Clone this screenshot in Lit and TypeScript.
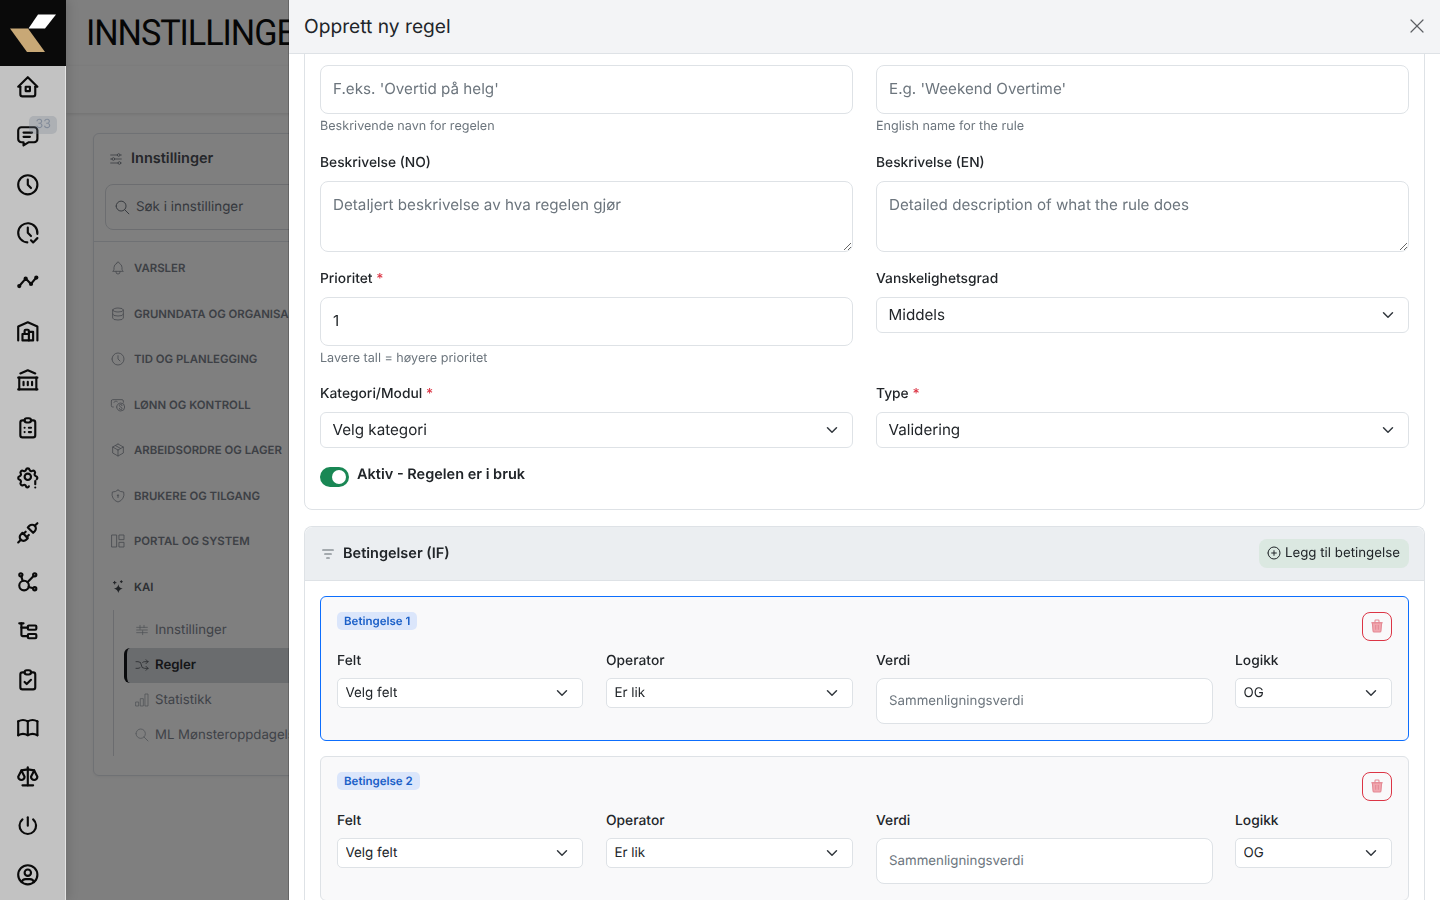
import { LitElement, html, css, svg } from 'lit';
import { customElement } from 'lit/decorators.js';

const I = {
  home: ['M5 12l-2 0l9 -9l9 9l-2 0', 'M5 12v7a2 2 0 0 0 2 2h10a2 2 0 0 0 2 -2v-7', 'M10 12h4v4h-4z'],
  message: ['M8 9h8', 'M8 13h6', 'M18 4a3 3 0 0 1 3 3v8a3 3 0 0 1 -3 3h-5l-5 3v-3h-2a3 3 0 0 1 -3 -3v-8a3 3 0 0 1 3 -3h12z'],
  clock: ['M3 12a9 9 0 1 0 18 0a9 9 0 1 0 -18 0', 'M12 7v5l3 3'],
  clockCheck: ['M20.942 13.021a9 9 0 1 0 -9.407 7.967', 'M12 7v5l3 3', 'M15 19l2 2l4 -4'],
  timeline: ['M4 16l6 -7l5 5l5 -6', 'M14 14a1 1 0 1 0 2 0a1 1 0 1 0 -2 0', 'M9 9a1 1 0 1 0 2 0a1 1 0 1 0 -2 0', 'M3 16a1 1 0 1 0 2 0a1 1 0 1 0 -2 0', 'M19 8a1 1 0 1 0 2 0a1 1 0 1 0 -2 0'],
  warehouse: ['M3 21v-13l9 -4l9 4v13', 'M13 13h4v8h-10v-6h6', 'M13 21v-9a1 1 0 0 0 -1 -1h-2a1 1 0 0 0 -1 1v3'],
  bank: ['M3 21l18 0', 'M3 10l18 0', 'M5 6l7 -3l7 3', 'M4 10l0 11', 'M20 10l0 11', 'M8 14l0 3', 'M12 14l0 3', 'M16 14l0 3'],
  clipList: ['M9 5h-2a2 2 0 0 0 -2 2v12a2 2 0 0 0 2 2h10a2 2 0 0 0 2 -2v-12a2 2 0 0 0 -2 -2h-2', 'M9 5a2 2 0 0 1 2 -2h2a2 2 0 0 1 2 2a2 2 0 0 1 -2 2h-2a2 2 0 0 1 -2 -2z', 'M9 12l.01 0', 'M13 12l2 0', 'M9 16l.01 0', 'M13 16l2 0'],
  settingsAlert: ['M13 20.9c-.5 1.4 -2.4 1.2 -2.7 -.1a1.724 1.724 0 0 0 -2.573 -1.066c-1.543 .94 -3.31 -.826 -2.37 -2.37a1.724 1.724 0 0 0 -1.065 -2.572c-1.756 -.426 -1.756 -2.924 0 -3.35a1.724 1.724 0 0 0 1.066 -2.573c-.94 -1.543 .826 -3.31 2.37 -2.37c1 .608 2.296 .07 2.572 -1.065c.426 -1.756 2.924 -1.756 3.35 0a1.724 1.724 0 0 0 2.573 1.066c1.543 -.94 3.31 .826 2.37 2.37a1.724 1.724 0 0 0 1.065 2.572c1.4 .34 1.7 2 .7 2.9', 'M9 12a3 3 0 1 0 6 0a3 3 0 1 0 -6 0', 'M19 16v3', 'M19 22v.01'],
  plug: ['M7 12l5 5l-1.5 1.5a3.536 3.536 0 1 1 -5 -5l1.5 -1.5z', 'M17 12l-5 -5l1.5 -1.5a3.536 3.536 0 1 1 5 5l-1.5 1.5z', 'M3 21l2.5 -2.5', 'M18.5 5.5l2.5 -2.5', 'M10 11l-2 2', 'M13 14l-2 2'],
  affiliate: ['M5.931 6.936l1.275 4.249m5.607 5.609l4.251 1.275', 'M11.683 12.317l5.759 -5.759', 'M4 5.5a1.5 1.5 0 1 0 3 0a1.5 1.5 0 1 0 -3 0', 'M17 5.5a1.5 1.5 0 1 0 3 0a1.5 1.5 0 1 0 -3 0', 'M17 18.5a1.5 1.5 0 1 0 3 0a1.5 1.5 0 1 0 -3 0', 'M4 15.5a4.5 4.5 0 1 0 9 0a4.5 4.5 0 1 0 -9 0'],
  subtask: ['M6 9l6 0', 'M4 5l4 0', 'M6 5v11a1 1 0 0 0 1 1h5', 'M12 8a1 1 0 0 1 1 -1h6a1 1 0 0 1 1 1v2a1 1 0 0 1 -1 1h-6a1 1 0 0 1 -1 -1z', 'M12 16a1 1 0 0 1 1 -1h6a1 1 0 0 1 1 1v2a1 1 0 0 1 -1 1h-6a1 1 0 0 1 -1 -1z'],
  clipCheck: ['M9 5h-2a2 2 0 0 0 -2 2v12a2 2 0 0 0 2 2h10a2 2 0 0 0 2 -2v-12a2 2 0 0 0 -2 -2h-2', 'M9 5a2 2 0 0 1 2 -2h2a2 2 0 0 1 2 2a2 2 0 0 1 -2 2h-2a2 2 0 0 1 -2 -2z', 'M9 14l2 2l4 -4'],
  book: ['M3 19a9 9 0 0 1 9 0a9 9 0 0 1 9 0', 'M3 6a9 9 0 0 1 9 0a9 9 0 0 1 9 0', 'M3 6l0 13', 'M12 6l0 13', 'M21 6l0 13'],
  scale: ['M7 20l10 0', 'M6 6l6 -1l6 1', 'M12 3l0 17', 'M9 12l-3 -6l-3 6a3 3 0 0 0 6 0', 'M21 12l-3 -6l-3 6a3 3 0 0 0 6 0'],
  power: ['M7 6a7.75 7.75 0 1 0 10 0', 'M12 4l0 8'],
  user: ['M3 12a9 9 0 1 0 18 0a9 9 0 1 0 -18 0', 'M9 10a3 3 0 1 0 6 0a3 3 0 1 0 -6 0', 'M6.168 18.849a4 4 0 0 1 3.832 -2.849h4a4 4 0 0 1 3.834 2.855'],
  sliders: ['M14 6a2 2 0 1 0 4 0a2 2 0 1 0 -4 0', 'M4 6l10 0', 'M18 6l2 0', 'M6 12a2 2 0 1 0 4 0a2 2 0 1 0 -4 0', 'M4 12l2 0', 'M10 12l10 0', 'M15 18a2 2 0 1 0 4 0a2 2 0 1 0 -4 0', 'M4 18l11 0', 'M19 18l1 0'],
  search: ['M3 10a7 7 0 1 0 14 0a7 7 0 1 0 -14 0', 'M21 21l-6 -6'],
  bell: ['M10 5a2 2 0 1 1 4 0a7 7 0 0 1 4 6v3a4 4 0 0 0 2 3h-16a4 4 0 0 0 2 -3v-3a7 7 0 0 1 4 -6', 'M9 17v1a3 3 0 0 0 6 0v-1'],
  database: ['M4 6a8 3 0 1 0 16 0a8 3 0 1 0 -16 0', 'M4 6v6a8 3 0 0 0 16 0v-6', 'M4 12v6a8 3 0 0 0 16 0v-6'],
  cash: ['M5 15h-1a2 2 0 0 1 -2 -2v-7a2 2 0 0 1 2 -2h14a2 2 0 0 1 2 2v2', 'M10 15a6 6 0 1 0 12 0a6 6 0 1 0 -12 0', 'M18 13a2 2 0 0 0 -4 0c0 2 4 2 4 4a2 2 0 0 1 -4 0', 'M6 8a3 3 0 0 1 5 -1'],
  box: ['M12 3l8 4.5l0 9l-8 4.5l-8 -4.5l0 -9l8 -4.5', 'M12 12l8 -4.5', 'M12 12l0 9', 'M12 12l-8 -4.5', 'M8 5.25l8 4.5'],
  shield: ['M12 3a12 12 0 0 0 8.5 3a12 12 0 0 1 -8.5 15a12 12 0 0 1 -8.5 -15a12 12 0 0 0 8.5 -3', 'M11 11a1 1 0 1 0 2 0a1 1 0 1 0 -2 0', 'M12 12l0 2.5'],
  layout: ['M3 3h7v18h-7z', 'M14 3h7v7h-7z', 'M14 14h7v7h-7z'],
  sparkleDots: ['M5 5.5h4', 'M7 3.5v4', 'M15.5 4h3', 'M17 2.5v3'],
  tune: ['M4 8h16', 'M4 16h16', 'M4 12h16', 'M9 5v6', 'M15 5v3', 'M13 13v6'],
  shuffle: ['M18 4l3 3l-3 3', 'M18 20l3 -3l-3 -3', 'M3 7h3a5 5 0 0 1 5 5a5 5 0 0 0 5 5h5', 'M21 7h-5a4.978 4.978 0 0 0 -3 1m-4 8a4.984 4.984 0 0 1 -3 1h-3'],
  bars: ['M3 15h4v6h-4z', 'M10 10h4v11h-4z', 'M17 3h4v18h-4z'],
  filter: ['M4 6h16', 'M7 12h10', 'M10 18h4'],
  plusCircle: ['M3 12a9 9 0 1 0 18 0a9 9 0 1 0 -18 0', 'M8.5 12h7', 'M12 8.5v7'],
  close: ['M4 4l16 16', 'M20 4l-16 16'],
};

const icon = (paths: string[], size = 24, sw = 2) => html`<svg class="ic" width=${size} height=${size} viewBox="0 0 24 24" fill="none" stroke="currentColor" stroke-width=${sw} stroke-linecap="round" stroke-linejoin="round">${paths.map((d) => svg`<path d=${d}></path>`)}</svg>`;

const CHEVRON = "url(\"data:image/svg+xml,%3csvg xmlns='http://www.w3.org/2000/svg' viewBox='0 0 16 16'%3e%3cpath fill='none' stroke='%23343a40' stroke-linecap='round' stroke-linejoin='round' stroke-width='2' d='m2 5 6 6 6-6'/%3e%3c/svg%3e\")";

@customElement('app-root')
export class AppRoot extends LitElement {
  static styles = css`
    :host {
      display: flex;
      position: relative;
      width: 1440px;
      height: 900px;
      overflow: hidden;
      font-family: 'Inter', sans-serif;
      text-rendering: geometricPrecision;
      color: #212529;
      background: #fff;
    }
    * { box-sizing: border-box; }
    .ic { display: block; flex: none; }

    .rail {
      position: relative;
      z-index: 3;
      flex: none;
      width: 66px;
      height: 900px;
      background: #c2c2c2;
      box-shadow: inset -1px 0 0 #e4e4e4, 3px 0 10px rgba(0, 0, 0, .12);
      overflow: hidden;
    }
    .logo { position: relative; width: 66px; height: 66px; background: #0a0a0a; margin-bottom: 8px; }
    .logo svg { display: block; }
    .nav {
      display: flex;
      flex-direction: column;
      gap: 23.2px;
      padding-left: 15.2px;
      color: #0a0a0a;
    }
    .nav + .nav { margin-top: 30.4px; }
    .nav-item { position: relative; height: 25.6px; }
    .count {
      position: absolute;
      left: 14px;
      top: -7px;
      width: 28px;
      height: 18px;
      border-radius: 5px;
      background: rgba(120, 130, 145, .28);
      color: #828b99;
      font-size: 12.5px;
      line-height: 17px;
      text-align: center;
    }

    .page { flex: 1; min-width: 0; background: #fff; }
    .page-head { height: 66px; padding-left: 19.5px; display: flex; align-items: center; }
    .page-head h1 {
      margin: 0;
      font: 400 36px/1 'Roboto', sans-serif;
      letter-spacing: -1.1px;
      color: #0c0c0c;
      white-space: nowrap;
      transform: scaleX(.95);
      transform-origin: left center;
    }
    .subbar { height: 47px; background: #fff; box-shadow: 0 1px 4px rgba(0, 0, 0, .12); }
    .side {
      margin: 20px 0 0 27px;
      width: 340px;
      height: 643px;
      border: 1px solid #dfe2e8;
      border-radius: 6px;
      box-shadow: 0 1px 3px rgba(0, 0, 0, .06);
    }
    .side-head {
      display: flex;
      align-items: center;
      gap: 7px;
      height: 47px;
      padding: 2px 14px 0;
      font-size: 14.5px;
      font-weight: 600;
      color: #4a4e55;
    }
    .side-head .ic { color: #7c828b; }
    .side-search {
      display: flex;
      align-items: center;
      gap: 5px;
      height: 46px;
      margin: 3px 11px 11px;
      padding: 0 0 1px 8px;
      border: 1px solid #d8dbe0;
      border-radius: 8px;
      font-size: 13.4px;
      color: #6c727c;
    }
    .side-search .ic { margin-top: 1px; }
    .side-list { border-top: 1px solid #dfe2e8; padding: 3.4px 0 0 16px; }
    .group {
      display: flex;
      align-items: center;
      gap: 8px;
      height: 45.5px;
      font-size: 11.4px;
      font-weight: 600;
      color: #7b818b;
      white-space: nowrap;
    }
    .group .ic { color: #91969f; }
    .group.open { color: #5a5f68; }
    .group.open .ic { color: #40444b; }
    .sub { margin: .5px 0 0 3px; padding: 3px 0 2px 10px; border-left: 1px solid #d6d9de; height: 146px; }
    .sub-item {
      display: flex;
      align-items: center;
      gap: 5px;
      height: 35px;
      padding-left: 10px;
      font-size: 13.2px;
      color: #7f8590;
      white-space: nowrap;
    }
    .sub-item .ic { color: #9aa0a9; }
    .sub-item.active {
      background: #d5d8dd;
      color: #2a2c30;
      font-weight: 600;
      border-left: 3px solid #14161a;
      border-radius: 6px 0 0 6px;
      padding-left: 7px;
    }
    .sub-item.active .ic { color: #40444b; }

    .scrim {
      position: absolute;
      left: 66px;
      top: 0;
      right: 0;
      bottom: 0;
      z-index: 1;
      background: rgba(0, 0, 0, .5);
      backdrop-filter: blur(.6px);
    }

    .drawer {
      position: absolute;
      left: 289px;
      top: 0;
      right: 0;
      bottom: 0;
      z-index: 2;
      display: flex;
      flex-direction: column;
      background: #fff;
      box-shadow: -1px 0 0 rgba(0, 0, 0, .2);
    }
    .drawer-head {
      flex: none;
      display: flex;
      align-items: center;
      justify-content: space-between;
      height: 54px;
      padding: 0 14px 2px 15px;
      background: #f3f4f6;
      border-bottom: 1px solid #dee2e6;
    }
    .drawer-head h2 { margin: 0; font-size: 19.2px; font-weight: 400; color: #212529; }
    .close { color: #5c5f63; }
    .drawer-body { flex: 1; min-height: 0; overflow: hidden; padding: 0 15px; }
    .scroller { margin-top: -33.5px; }

    .card { border: 1px solid #dee2e6; border-radius: 8px; padding: 15px; margin-bottom: 16px; }
    .grid {
      display: grid;
      grid-template-columns: 1fr 1fr;
      column-gap: 23px;
      row-gap: 16.5px;
    }
    label {
      display: block;
      font-size: 13.8px;
      line-height: 21px;
      font-weight: 500;
      color: #212529;
      margin-bottom: 7.5px;
    }
    .req { color: #dc3545; }
    input, textarea, select {
      display: block;
      width: 100%;
      margin: 0;
      font-family: inherit;
      font-size: 15.2px;
      text-rendering: geometricPrecision;
      color: #212529;
      background-color: #fff;
      border: 1px solid #dee2e6;
      outline: none;
    }
    input, textarea { border-radius: 8px; padding: 0 12px 1px; }
    input { height: 48.6px; }
    textarea { height: 71px; padding-top: 11px; line-height: 24px; resize: vertical; }
    input::placeholder, textarea::placeholder { color: #6c757d; opacity: 1; }
    select {
      appearance: none;
      height: 36px;
      padding: 0 36px 2px 11.5px;
      border-radius: 6px;
      background-image: ${css([CHEVRON] as unknown as TemplateStringsArray)};
      background-repeat: no-repeat;
      background-position: right 12px center;
      background-size: 16px 12px;
    }
    .help { margin: 3.5px 0 0; font-size: 12.6px; line-height: 19px; color: #6c757d; }
    .row-tight { margin-top: -1px; }
    .switch {
      display: flex;
      align-items: flex-start;
      gap: 8px;
      margin: 19px 0 7px;
      font-size: 14.5px;
      font-weight: 600;
      line-height: 16px;
      color: #212529;
    }
    .track {
      position: relative;
      width: 29px;
      height: 20px;
      border-radius: 10px;
      background: #198754;
    }
    .knob {
      position: absolute;
      right: 3px;
      top: 3px;
      width: 14px;
      height: 14px;
      border-radius: 50%;
      background: #fff;
    }

    .section { border: 1px solid #dee2e6; border-radius: 8px; border-bottom: 0; }
    .section-head {
      display: flex;
      align-items: center;
      height: 54px;
      padding: 0 15px;
      background: #ebeef1;
      border-bottom: 1px solid #dee2e6;
      border-radius: 8px 8px 0 0;
    }
    .section-head .title {
      display: flex;
      align-items: center;
      gap: 7px;
      flex: 1;
      font-size: 14.5px;
      font-weight: 600;
      color: #212529;
    }
    .section-head .title .ic { color: #5f666d; }
    .add {
      display: flex;
      align-items: center;
      gap: 3px;
      height: 29px;
      padding: 0 9px 1px 7px;
      border-radius: 8px;
      background: #dbe8e1;
      font-size: 13.3px;
      color: #212529;
      white-space: nowrap;
    }
    .section-body { padding: 15px; display: flex; flex-direction: column; gap: 15px; }
    .cond {
      height: 145px;
      flex: none;
      padding: 15px 16px;
      border: 1px solid #dee2e6;
      border-radius: 6px;
      background: #f9f9fa;
    }
    .cond.focus { border-color: #0d6efd; }
    .cond-top { display: flex; align-items: flex-start; justify-content: space-between; height: 39px; }
    .tag {
      height: 18px;
      padding: 0 7px;
      border-radius: 5px;
      background: #dbe6fb;
      color: #1a5fc8;
      font-size: 11.5px;
      font-weight: 600;
      line-height: 18px;
    }
    .del {
      display: flex;
      align-items: center;
      justify-content: center;
      width: 30px;
      height: 29px;
      border: 1px solid #dc3545;
      border-radius: 8px;
    }
    .del svg { display: block; margin-top: -2px; }
    .cond-row {
      display: grid;
      grid-template-columns: 246px 247px 337px 156px;
      column-gap: 23px;
      align-items: start;
    }
    .cond-row > :last-child { margin-left: -1px; }
    .cond-row label { margin-bottom: 6px; }
    .cond-row select {
      height: 30px;
      padding: 0 36px 0 7.5px;
      border-radius: 5px;
      font-size: 13.4px;
    }
    .cond-row input { height: 46px; padding-bottom: 1px; font-size: 13.3px; }
  `;

  private renderRail() {
    const top = [I.home, I.message, I.clock, I.clockCheck, I.timeline, I.warehouse, I.bank, I.clipList, I.settingsAlert];
    const bottom = [I.plug, I.affiliate, I.subtask, I.clipCheck, I.book, I.scale, I.power, I.user];
    return html`
      <aside class="rail">
        <div class="logo">
          <svg width="66" height="66" viewBox="0 0 66 66">
            <polygon points="38,14.5 56,14.5 45,28.5 28.5,28.5" fill="#fff"></polygon>
            <polygon points="10,28.5 28,28.5 45,52 27,52" fill="#c8a876"></polygon>
          </svg>
        </div>
        <div class="nav">
          ${top.map((p) => html`<div class="nav-item">${icon(p, 25.6)}${p === I.message ? html`<span class="count">33</span>` : ''}</div>`)}
        </div>
        <div class="nav">
          ${bottom.map((p) => html`<div class="nav-item">${icon(p, 25.6)}</div>`)}
        </div>
      </aside>
    `;
  }

  private renderPage() {
    const groups: [string[], string][] = [
      [I.bell, 'VARSLER'],
      [I.database, 'GRUNNDATA OG ORGANISASJON'],
      [I.clock, 'TID OG PLANLEGGING'],
      [I.cash, 'LØNN OG KONTROLL'],
      [I.box, 'ARBEIDSORDRE OG LAGER'],
      [I.shield, 'BRUKERE OG TILGANG'],
      [I.layout, 'PORTAL OG SYSTEM'],
    ];
    return html`
      <main class="page">
        <div class="page-head"><h1>INNSTILLINGER</h1></div>
        <div class="subbar"></div>
        <div class="side">
          <div class="side-head">${icon(I.sliders, 16, 1.3)} Innstillinger</div>
          <div class="side-search">${icon(I.search, 17, 1.4)} Søk i innstillinger</div>
          <div class="side-list">
            ${groups.map(([p, t]) => html`<div class="group">${icon(p, 16, 1.3)}${t}</div>`)}
            <div class="group open">
              <svg class="ic" width="16" height="16" viewBox="0 0 24 24" fill="currentColor" stroke="none">
                <path d="M12.5 8c.8 4 2.2 5.4 6.5 6.5c-4.3 1.1 -5.7 2.5 -6.5 6.5c-.8 -4 -2.2 -5.4 -6.5 -6.5c4.3 -1.1 5.7 -2.5 6.5 -6.5z"></path>
                ${I.sparkleDots.map((d) => svg`<path d=${d} stroke="currentColor" stroke-width="1.5" stroke-linecap="round"></path>`)}
              </svg>
              KAI
            </div>
            <div class="sub">
              <div class="sub-item">${icon(I.tune, 16, 1.1)}Innstillinger</div>
              <div class="sub-item active">${icon(I.shuffle, 16, 1.1)}Regler</div>
              <div class="sub-item">${icon(I.bars, 16, 1.1)}Statistikk</div>
              <div class="sub-item">${icon(I.search, 16, 1.1)}ML Mønsteroppdagelse</div>
            </div>
          </div>
        </div>
      </main>
    `;
  }

  private renderCondition(n: number, focused: boolean) {
    return html`
      <div class="cond ${focused ? 'focus' : ''}">
        <div class="cond-top">
          <span class="tag">Betingelse ${n}</span>
          <span class="del">
            <svg width="16" height="16" viewBox="0 0 24 24" fill="none" stroke="#e58a95" stroke-width="1.6" stroke-linecap="round" stroke-linejoin="round">
              <path d="M5 7l1 12a2 2 0 0 0 2 2h8a2 2 0 0 0 2 -2l1 -12z" fill="#f0a8b0"></path>
              <path d="M4 7h16"></path>
              <path d="M9 7v-3a1 1 0 0 1 1 -1h4a1 1 0 0 1 1 1v3"></path>
              <path d="M10 11v6"></path>
              <path d="M14 11v6"></path>
            </svg>
          </span>
        </div>
        <div class="cond-row">
          <div><label>Felt</label><select><option>Velg felt</option></select></div>
          <div><label>Operator</label><select><option>Er lik</option></select></div>
          <div><label>Verdi</label><input placeholder="Sammenligningsverdi" /></div>
          <div><label>Logikk</label><select><option>OG</option></select></div>
        </div>
      </div>
    `;
  }

  private renderDrawer() {
    return html`
      <section class="drawer">
        <header class="drawer-head">
          <h2>Opprett ny regel</h2>
          <span class="close">${icon(I.close, 18, 1.6)}</span>
        </header>
        <div class="drawer-body">
          <div class="scroller">
            <div class="card">
              <div class="grid">
                <div>
                  <label>Regelnavn (NO) <span class="req">*</span></label>
                  <input placeholder="F.eks. 'Overtid på helg'" />
                  <div class="help">Beskrivende navn for regelen</div>
                </div>
                <div>
                  <label>Regelnavn (EN)</label>
                  <input placeholder="E.g. 'Weekend Overtime'" />
                  <div class="help">English name for the rule</div>
                </div>
                <div>
                  <label>Beskrivelse (NO)</label>
                  <textarea placeholder="Detaljert beskrivelse av hva regelen gjør"></textarea>
                </div>
                <div>
                  <label>Beskrivelse (EN)</label>
                  <textarea placeholder="Detailed description of what the rule does"></textarea>
                </div>
                <div>
                  <label>Prioritet <span class="req">*</span></label>
                  <input value="1" />
                  <div class="help">Lavere tall = høyere prioritet</div>
                </div>
                <div>
                  <label>Vanskelighetsgrad</label>
                  <select><option>Middels</option></select>
                </div>
                <div class="row-tight">
                  <label>Kategori/Modul <span class="req">*</span></label>
                  <select><option>Velg kategori</option></select>
                </div>
                <div class="row-tight">
                  <label>Type <span class="req">*</span></label>
                  <select><option>Validering</option></select>
                </div>
              </div>
              <div class="switch"><span class="track"><span class="knob"></span></span><span>Aktiv - Regelen er i bruk</span></div>
            </div>
            <div class="section">
              <div class="section-head">
                <div class="title">${icon(I.filter, 16, 1.6)} Betingelser (IF)</div>
                <div class="add">${icon(I.plusCircle, 16, 1.5)} Legg til betingelse</div>
              </div>
              <div class="section-body">
                ${this.renderCondition(1, true)}
                ${this.renderCondition(2, false)}
              </div>
            </div>
          </div>
        </div>
      </section>
    `;
  }

  render() {
    return html`
      ${this.renderRail()}
      ${this.renderPage()}
      <div class="scrim"></div>
      ${this.renderDrawer()}
    `;
  }
}
